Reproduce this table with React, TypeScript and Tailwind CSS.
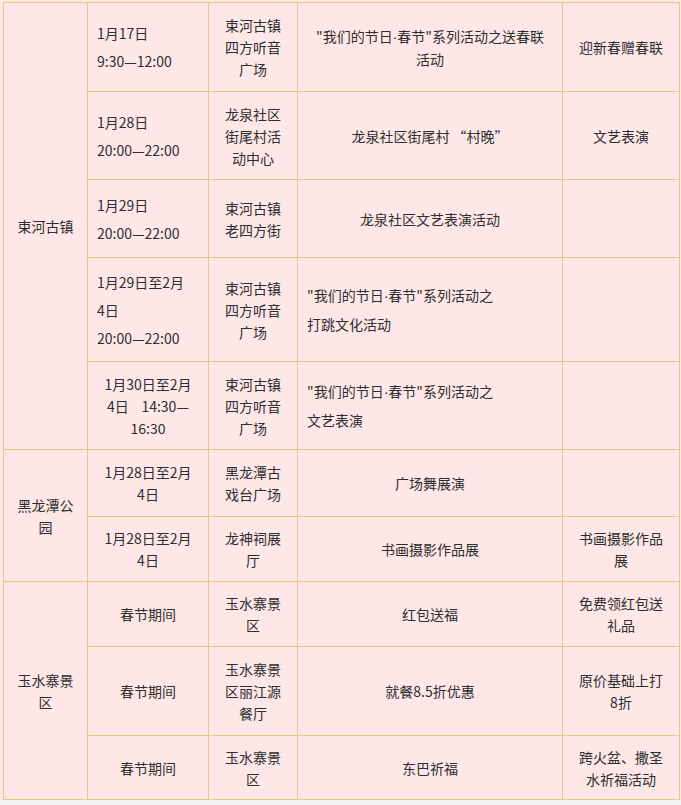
import * as React from "react";

type Cell = {
  lines: React.ReactNode[];
  align?: "left" | "center";
  tall?: boolean;
};

type Row = {
  h: string;
  area?: { lines: string[]; span: number };
  date: Cell;
  place: Cell;
  act: Cell;
  note: Cell;
};

const Q = "\u0022";

// narrow middle dot, the CJK font draws it full width
const festival = (tail: string) => (
  <>
    {Q}我们的节日
    <span style={{ fontFamily: '"Liberation Sans", sans-serif' }}>·</span>
    春节{Q}系列活动之{tail}
  </>
);

const rows: Row[] = [
  {
    h: "h-[89px]",
    area: { lines: ["束河古镇"], span: 5 },
    date: { lines: ["1月17日", "9:30—12:00"], align: "left", tall: true },
    place: { lines: ["束河古镇", "四方听音", "广场"] },
    act: { lines: [festival("送春联"), "活动"] },
    note: { lines: ["迎新春赠春联"] },
  },
  {
    h: "h-[88px]",
    date: { lines: ["1月28日", "20:00—22:00"], align: "left", tall: true },
    place: { lines: ["龙泉社区", "街尾村活", "动中心"] },
    act: { lines: ["龙泉社区街尾村 “村晚”"] },
    note: { lines: ["文艺表演"] },
  },
  {
    h: "h-[78px]",
    date: { lines: ["1月29日", "20:00—22:00"], align: "left", tall: true },
    place: { lines: ["束河古镇", "老四方街"] },
    act: { lines: ["龙泉社区文艺表演活动"] },
    note: { lines: [] },
  },
  {
    h: "h-[104px]",
    date: { lines: ["1月29日至2月", "4日", "20:00—22:00"], align: "left", tall: true },
    place: { lines: ["束河古镇", "四方听音", "广场"] },
    act: { lines: [festival(""), "打跳文化活动"], align: "left", tall: true },
    note: { lines: [] },
  },
  {
    h: "h-[88px]",
    date: { lines: ["1月30日至2月", "4日\u00a0\u00a0\u00a0\u00a014:30—", "16:30"] },
    place: { lines: ["束河古镇", "四方听音", "广场"] },
    act: { lines: [festival(""), "文艺表演"], align: "left", tall: true },
    note: { lines: [] },
  },
  {
    h: "h-[67px]",
    area: { lines: ["黑龙潭公", "园"], span: 2 },
    date: { lines: ["1月28日至2月", "4日"] },
    place: { lines: ["黑龙潭古", "戏台广场"] },
    act: { lines: ["广场舞展演"] },
    note: { lines: [] },
  },
  {
    h: "h-[65px]",
    date: { lines: ["1月28日至2月", "4日"] },
    place: { lines: ["龙神祠展", "厅"] },
    act: { lines: ["书画摄影作品展"] },
    note: { lines: ["书画摄影作品", "展"] },
  },
  {
    h: "h-[65px]",
    area: { lines: ["玉水寨景", "区"], span: 3 },
    date: { lines: ["春节期间"] },
    place: { lines: ["玉水寨景", "区"] },
    act: { lines: ["红包送福"] },
    note: { lines: ["免费领红包送", "礼品"] },
  },
  {
    h: "h-[89px]",
    date: { lines: ["春节期间"] },
    place: { lines: ["玉水寨景", "区丽江源", "餐厅"] },
    act: { lines: ["就餐8.5折优惠"] },
    note: { lines: ["原价基础上打", "8折"] },
  },
  {
    h: "h-[64px]",
    date: { lines: ["春节期间"] },
    place: { lines: ["玉水寨景", "区"] },
    act: { lines: ["东巴祈福"] },
    note: { lines: ["跨火盆、撒圣", "水祈福活动"] },
  },
];

function CellText({ cell }: { cell: Cell }) {
  const lh = cell.tall ? "leading-[28px]" : "leading-[22px]";
  const al = cell.align === "left" ? "text-left" : "text-center";
  return (
    <div className={`${lh} ${al} whitespace-nowrap`}>
      {cell.lines.map((l, i) => (
        <div key={i}>{l}</div>
      ))}
    </div>
  );
}

const td = "border border-[#eec57a] align-middle px-[9px] py-0";

export default function App() {
  return (
    <div className="min-h-[805px] bg-[#f6f4f2]">
      <div
        className="bg-[#fde8e7] pt-[2px] pl-[3px] pr-[2px] text-[14px] text-[#2e2e2e]"
        style={{ fontFamily: '"Noto Sans CJK SC", "Noto Sans", sans-serif' }}
      >
        <table className="table-fixed border-collapse w-[676px]">
          <colgroup>
            <col className="w-[84px]" />
            <col className="w-[121px]" />
            <col className="w-[89px]" />
            <col className="w-[265px]" />
            <col className="w-[117px]" />
          </colgroup>
          <tbody>
            {rows.map((r, i) => (
              <tr key={i} className={r.h}>
                {r.area && (
                  <td rowSpan={r.area.span} className={td}>
                    <CellText cell={{ lines: r.area.lines }} />
                  </td>
                )}
                <td className={td}>
                  <CellText cell={r.date} />
                </td>
                <td className={td}>
                  <CellText cell={r.place} />
                </td>
                <td className={td}>
                  <CellText cell={r.act} />
                </td>
                <td className={td}>
                  <CellText cell={r.note} />
                </td>
              </tr>
            ))}
          </tbody>
        </table>
      </div>
    </div>
  );
}
